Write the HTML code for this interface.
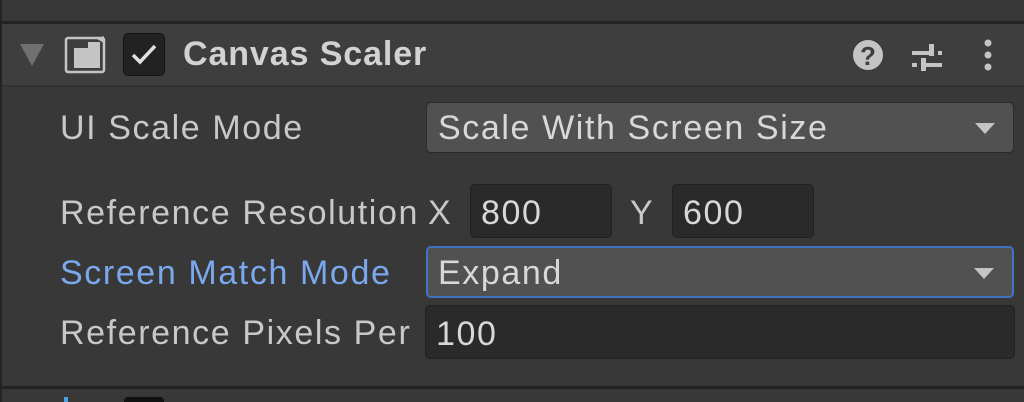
<!DOCTYPE html><html><head><style>
body{margin:0;width:1024px;height:402px;background:#383838;overflow:hidden;font-family:"Liberation Sans",sans-serif;position:relative}
div{position:absolute;box-sizing:border-box}
.t{color:#c8c8c8;font-size:34px;line-height:1;letter-spacing:1.6px;white-space:nowrap}
.dd{background:#515151;border:1px solid #2a2a2a;border-radius:5px;left:426px;width:588px}
.fld{background:#2a2a2a;border:1px solid #212121;border-radius:5px}
.arr{width:0;height:0;border-left:10px solid transparent;border-right:10px solid transparent;border-top:11px solid #c4c4c4;right:18px}
</style></head><body>
<div style="left:0;top:0;width:2px;height:402px;background:#232323"></div>
<div style="left:0;top:21px;width:1024px;height:3px;background:#232323"></div>
<div style="left:2px;top:24px;width:1022px;height:61px;background:#3e3e3e"></div>
<div style="left:2px;top:85px;width:1022px;height:2px;background:#303030"></div>
<div style="left:0;top:386px;width:1024px;height:3px;background:#232323"></div>
<div style="left:20px;top:44px;width:0;height:0;border-left:12px solid transparent;border-right:12px solid transparent;border-top:22px solid #707070"></div>
<svg style="position:absolute;left:64px;top:35px" width="44" height="39" viewBox="0 0 44 39"><rect x="2" y="3" width="38" height="34" rx="2" fill="none" stroke="#c4c4c4" stroke-width="2.5"/><path d="M10 13h14v-6h12v26h-26z" fill="#c4c4c4"/><path d="M33 4l7-3v7" fill="#c4c4c4"/></svg>
<div style="left:123px;top:33px;width:42px;height:43px;background:#222;border:1px solid #151515;border-radius:5px"></div>
<svg style="position:absolute;left:130px;top:42px" width="28" height="24"><path d="M3 13l7 7L25 4" fill="none" stroke="#e0e0e0" stroke-width="3.5"/></svg>
<div class="t" style="left:183px;top:37px;font-weight:bold;color:#d2d2d2;letter-spacing:0.9px">Canvas Scaler</div>
<svg style="position:absolute;left:852px;top:39px" width="32" height="32"><circle cx="16" cy="16" r="15" fill="#c4c4c4"/><text x="16" y="26" font-family="Liberation Sans" font-weight="bold" font-size="26" text-anchor="middle" fill="#3e3e3e">?</text></svg>
<svg style="position:absolute;left:910px;top:38px" width="34" height="34"><rect x="2" y="13" width="30" height="4" fill="#c4c4c4"/><rect x="19" y="6" width="5" height="12" fill="#c4c4c4"/><rect x="2" y="25" width="30" height="4" fill="#c4c4c4"/><rect x="11" y="20" width="5" height="13" fill="#c4c4c4"/><rect x="7" y="24" width="4" height="6" fill="#3e3e3e"/><rect x="24" y="12" width="4" height="6" fill="#3e3e3e"/></svg>
<svg style="position:absolute;left:980px;top:38px" width="16" height="34"><circle cx="8" cy="5" r="3.5" fill="#c4c4c4"/><circle cx="8" cy="17" r="3.5" fill="#c4c4c4"/><circle cx="8" cy="29" r="3.5" fill="#c4c4c4"/></svg>
<div class="t" style="left:60px;top:111px">UI Scale Mode</div>
<div class="dd" style="top:102px;height:51px"><div class="t" style="left:11px;top:8px;color:#d8d8d8">Scale With Screen Size</div><div class="arr" style="top:20px"></div></div>
<div class="t" style="left:60px;top:196px">Reference Resolution</div>
<div class="t" style="left:428px;top:196px">X</div>
<div class="fld" style="left:470px;top:184px;width:142px;height:54px"><div class="t" style="left:10px;top:11px;color:#d8d8d8">800</div></div>
<div class="t" style="left:630px;top:196px">Y</div>
<div class="fld" style="left:672px;top:184px;width:142px;height:54px"><div class="t" style="left:10px;top:11px;color:#d8d8d8">600</div></div>
<div class="t" style="left:60px;top:256px;color:#7ba7ec">Screen Match Mode</div>
<div class="dd" style="top:246px;height:52px;border:2px solid #3f74c2"><div class="t" style="left:10px;top:8px;color:#d8d8d8">Expand</div><div class="arr" style="top:20px"></div></div>
<div class="t" style="left:60px;top:316px">Reference Pixels Per</div>
<div class="fld" style="left:425px;top:305px;width:590px;height:54px"><div class="t" style="left:10px;top:11px;color:#d8d8d8">100</div></div>
<div style="left:64px;top:397px;width:4px;height:5px;background:#4aa0e0"></div>
<div style="left:124px;top:397px;width:40px;height:5px;background:#111;border-radius:4px 4px 0 0"></div>
</body></html>
